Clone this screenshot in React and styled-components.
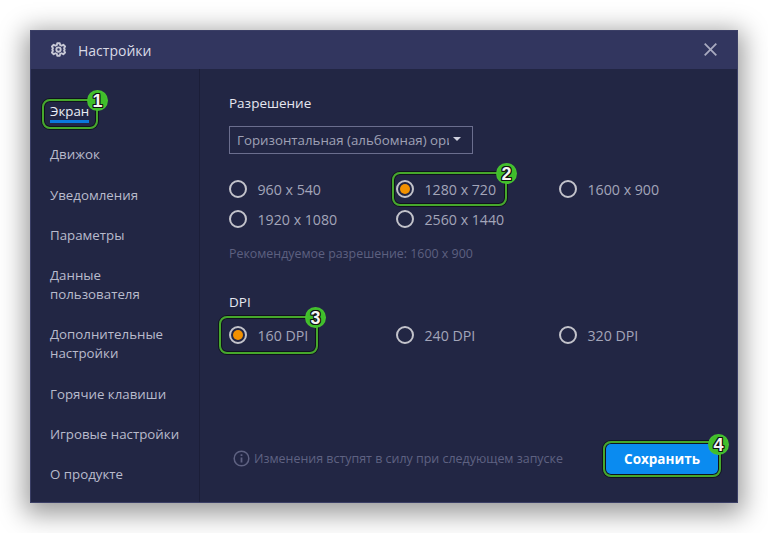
import React from "react";
import styled, { createGlobalStyle } from "styled-components";

const Global = createGlobalStyle`
  html, body { margin: 0; padding: 0; background: #fff; }
  body { width: 768px; height: 533px; overflow: hidden; font-family: "Open Sans", "Noto Sans", "Liberation Sans", sans-serif; }
`;
const Page = styled.div`
  width: 768px; height: 533px; padding: 30px; box-sizing: border-box;
`;
const Win = styled.div`
  width: 708px; height: 473px; display: flex; flex-direction: column;
  background: #222644;
  box-shadow: 0 6px 24px 5px rgba(0,0,0,.4);
  outline: 1px solid #3b3f66; outline-offset: -1px;
`;
const TitleBar = styled.div`
  height: 39px; flex: none; display: flex; align-items: center; background: #32365f;
  padding: 0 21px 0 21px; color: #d9dae6; font-size: 14px;
`;
const TitleText = styled.span`margin-left: 12px; flex: 1; position: relative; top: 1px;`;
const Body = styled.div`flex: 1; display: flex; min-height: 0;`;
const Side = styled.nav`
  width: 149px; flex: none; border-right: 1px solid #1b1e38; padding: 0 0 0 20px;
  display: flex; flex-direction: column; align-items: flex-start;
`;
const NavItem = styled.div`
  position: relative; font-size: 13.3px; line-height: 19px; color: ${p => p.$active ? "#eceef6" : "#b9bbcc"};
  margin-top: ${p => p.$mt}px; white-space: pre-line;
`;
const Underline = styled.div`height: 3px; background: #0a78dc; margin-top: -1px; width: 39px;`;
const Main = styled.main`flex: 1; padding: 25px 0 0 29px; position: relative; display: flex; flex-direction: column;`;
const Heading = styled.div`font-size: 13.5px; line-height: 19px; color: #e6e7f0;`;
const Select = styled.div`
  margin-top: 13px; width: 244px; height: 28px; box-sizing: border-box; border: 1px solid #6b6e8e;
  display: flex; align-items: center; padding-left: 7px; color: #9fa1b5; font-size: 13.3px; white-space: nowrap; overflow: hidden;
`;
const SelectText = styled.span`width: 212px; overflow: hidden; display: block;`;
const Caret = styled.span`
  margin-left: 4px; width: 0; height: 0; border-left: 4px solid transparent; border-right: 4px solid transparent; border-top: 4px solid #d0d1de;
  margin-top: -2px;
`;
const Grid = styled.div`
  display: grid; grid-template-columns: 167px 163px 1fr; grid-auto-rows: 30px; margin-top: ${p => p.$mt}px;
`;
const Option = styled.label`
  position: relative; display: flex; align-items: center; height: 30px; font-size: 14.2px; color: #a3a5b9; white-space: nowrap;
`;
const Radio = styled.span`
  width: 18px; height: 18px; box-sizing: border-box; border-radius: 50%; border: 2px solid #c3c3cb; flex: none;
  display: flex; align-items: center; justify-content: center; margin-right: 10.5px;
  &::after { content: ""; width: 10px; height: 10px; border-radius: 50%; background: ${p => p.$on ? "#f29100" : "transparent"}; }
`;
const Hint = styled.div`margin-top: 11px; font-size: 12.4px; line-height: 17px; color: #5d6080;`;
const DpiHead = styled(Heading)`margin-top: 31px;`;
const Footer = styled.div`
  position: relative; margin-top: auto; height: 36px; margin-bottom: 27px; display: flex; align-items: center; font-size: 12.45px; color: #5f6282; padding-left: 4px;
`;
const Note = styled.span`margin-left: 4px; flex: 1; white-space: nowrap;`;
const Save = styled.button`
  position: relative; width: 112px; height: 32px; margin: 2px 20px 0 0; border: 0; border-radius: 5px; background: #0a8bf0; color: #fff;
  font: 700 13.5px "Open Sans", "Noto Sans", sans-serif; padding: 0;
`;
const Ring = styled.span`
  position: absolute; pointer-events: none; box-sizing: border-box;
  left: ${p => p.$l}px; top: ${p => p.$t}px; width: ${p => p.$w}px; height: ${p => p.$h}px;
  border: 2px solid #46a82c; border-radius: 8px;
  box-shadow: 0 0 0 1px #10131c, inset 0 0 0 1px #10131c;
`;
const Badge = styled.span`
  position: absolute; pointer-events: none; left: ${p => p.$l}px; top: ${p => p.$t}px;
  width: 21px; height: 21px; border-radius: 50%; background: radial-gradient(circle, #3fbe2a 55%, #59c93f 100%);
  display: flex; align-items: center; justify-content: center;
  font: 700 18px/1 "Liberation Sans", Arial, sans-serif; color: #f4f4f4;
  text-shadow: -1px 0 #111, 1px 0 #111, 0 -1px #111, 0 1px #111, -1px -1px #111, 1px 1px #111, -1px 1px #111, 1px -1px #111;
`;

const Gear = () => (
  <svg width="15" height="15" viewBox="0 0 24 24" fill="none" stroke="#c8c9d6" strokeWidth="3" strokeLinejoin="round">
    <path d="M10 2h4l.7 3 2.3 1 2.7-1.600 2.800 2.800L20.900 10l1 2-1 2 1.600 2.800-2.800 2.800-2.700-1.600-2.300 1L14 22h-4l-.7-3-2.300-1-2.700 1.600-2.800-2.800L3.100 14l-1-2 1-2-1.600-2.800L4.300 4.400 7 6l2.300-1z" />
    <circle cx="12" cy="12" r="3.500" />
  </svg>
);
const Close = () => (
  <svg width="13" height="13" viewBox="0 0 13 13" stroke="#a9abc0" strokeWidth="1.800"><path d="M.7.7l11.600 11.600M12.300.7L.7 12.300" /></svg>
);
const Info = () => (
  <svg width="17" height="17" viewBox="0 0 17 17" fill="none" stroke="#5f6282" strokeWidth="1.500">
    <circle cx="8.500" cy="8.500" r="7.300" /><path d="M8.500 7.500v5M8.500 4.300v1.800" strokeWidth="1.800" />
  </svg>
);

const nav = [
  ["Движок", 22], ["Уведомления", 22], ["Параметры", 21], ["Данные\nпользователя", 21],
  ["Дополнительные\nнастройки", 21], ["Горячие клавиши", 22], ["Игровые настройки", 21], ["О продукте", 21],
];

export default function App() {
  return (
    <Page>
      <Global />
      <Win>
        <TitleBar><Gear /><TitleText>Настройки</TitleText><Close /></TitleBar>
        <Body>
          <Side>
            <NavItem $active $mt={33}>
              Экран
              <Underline />
              <Ring $l={-8} $t={-3} $w={56} $h={30} />
              <Badge $l={37} $t={-12}>1</Badge>
            </NavItem>
            {nav.map(([t, m]) => <NavItem key={t} $mt={m}>{t}</NavItem>)}
          </Side>
          <Main>
            <Heading>Разрешение</Heading>
            <Select><SelectText>Горизонтальная (альбомная) ориентация</SelectText><Caret /></Select>
            <Grid $mt={20}>
              <Option><Radio />960 x 540</Option>
              <Option>
                <Radio $on />1280 x 720
                <Ring $l={-4} $t={-2} $w={115} $h={34} />
                <Badge $l={100} $t={-11}>2</Badge>
              </Option>
              <Option><Radio />1600 x 900</Option>
              <Option><Radio />1920 x 1080</Option>
              <Option><Radio />2560 x 1440</Option>
            </Grid>
            <Hint>Рекомендуемое разрешение: 1600 x 900</Hint>
            <DpiHead>DPI</DpiHead>
            <Grid $mt={8}>
              <Option>
                <Radio $on />160 DPI
                <Ring $l={-10} $t={-4} $w={99} $h={38} />
                <Badge $l={76} $t={-13}>3</Badge>
              </Option>
              <Option><Radio />240 DPI</Option>
              <Option><Radio />320 DPI</Option>
            </Grid>
            <Footer>
              <Info /><Note>Изменения вступят в силу при следующем запуске</Note>
              <Save>
                Сохранить
                <Ring $l={-3} $t={-2} $w={118} $h={36} />
                <Badge $l={102} $t={-9}>4</Badge>
              </Save>
            </Footer>
          </Main>
        </Body>
      </Win>
    </Page>
  );
}
